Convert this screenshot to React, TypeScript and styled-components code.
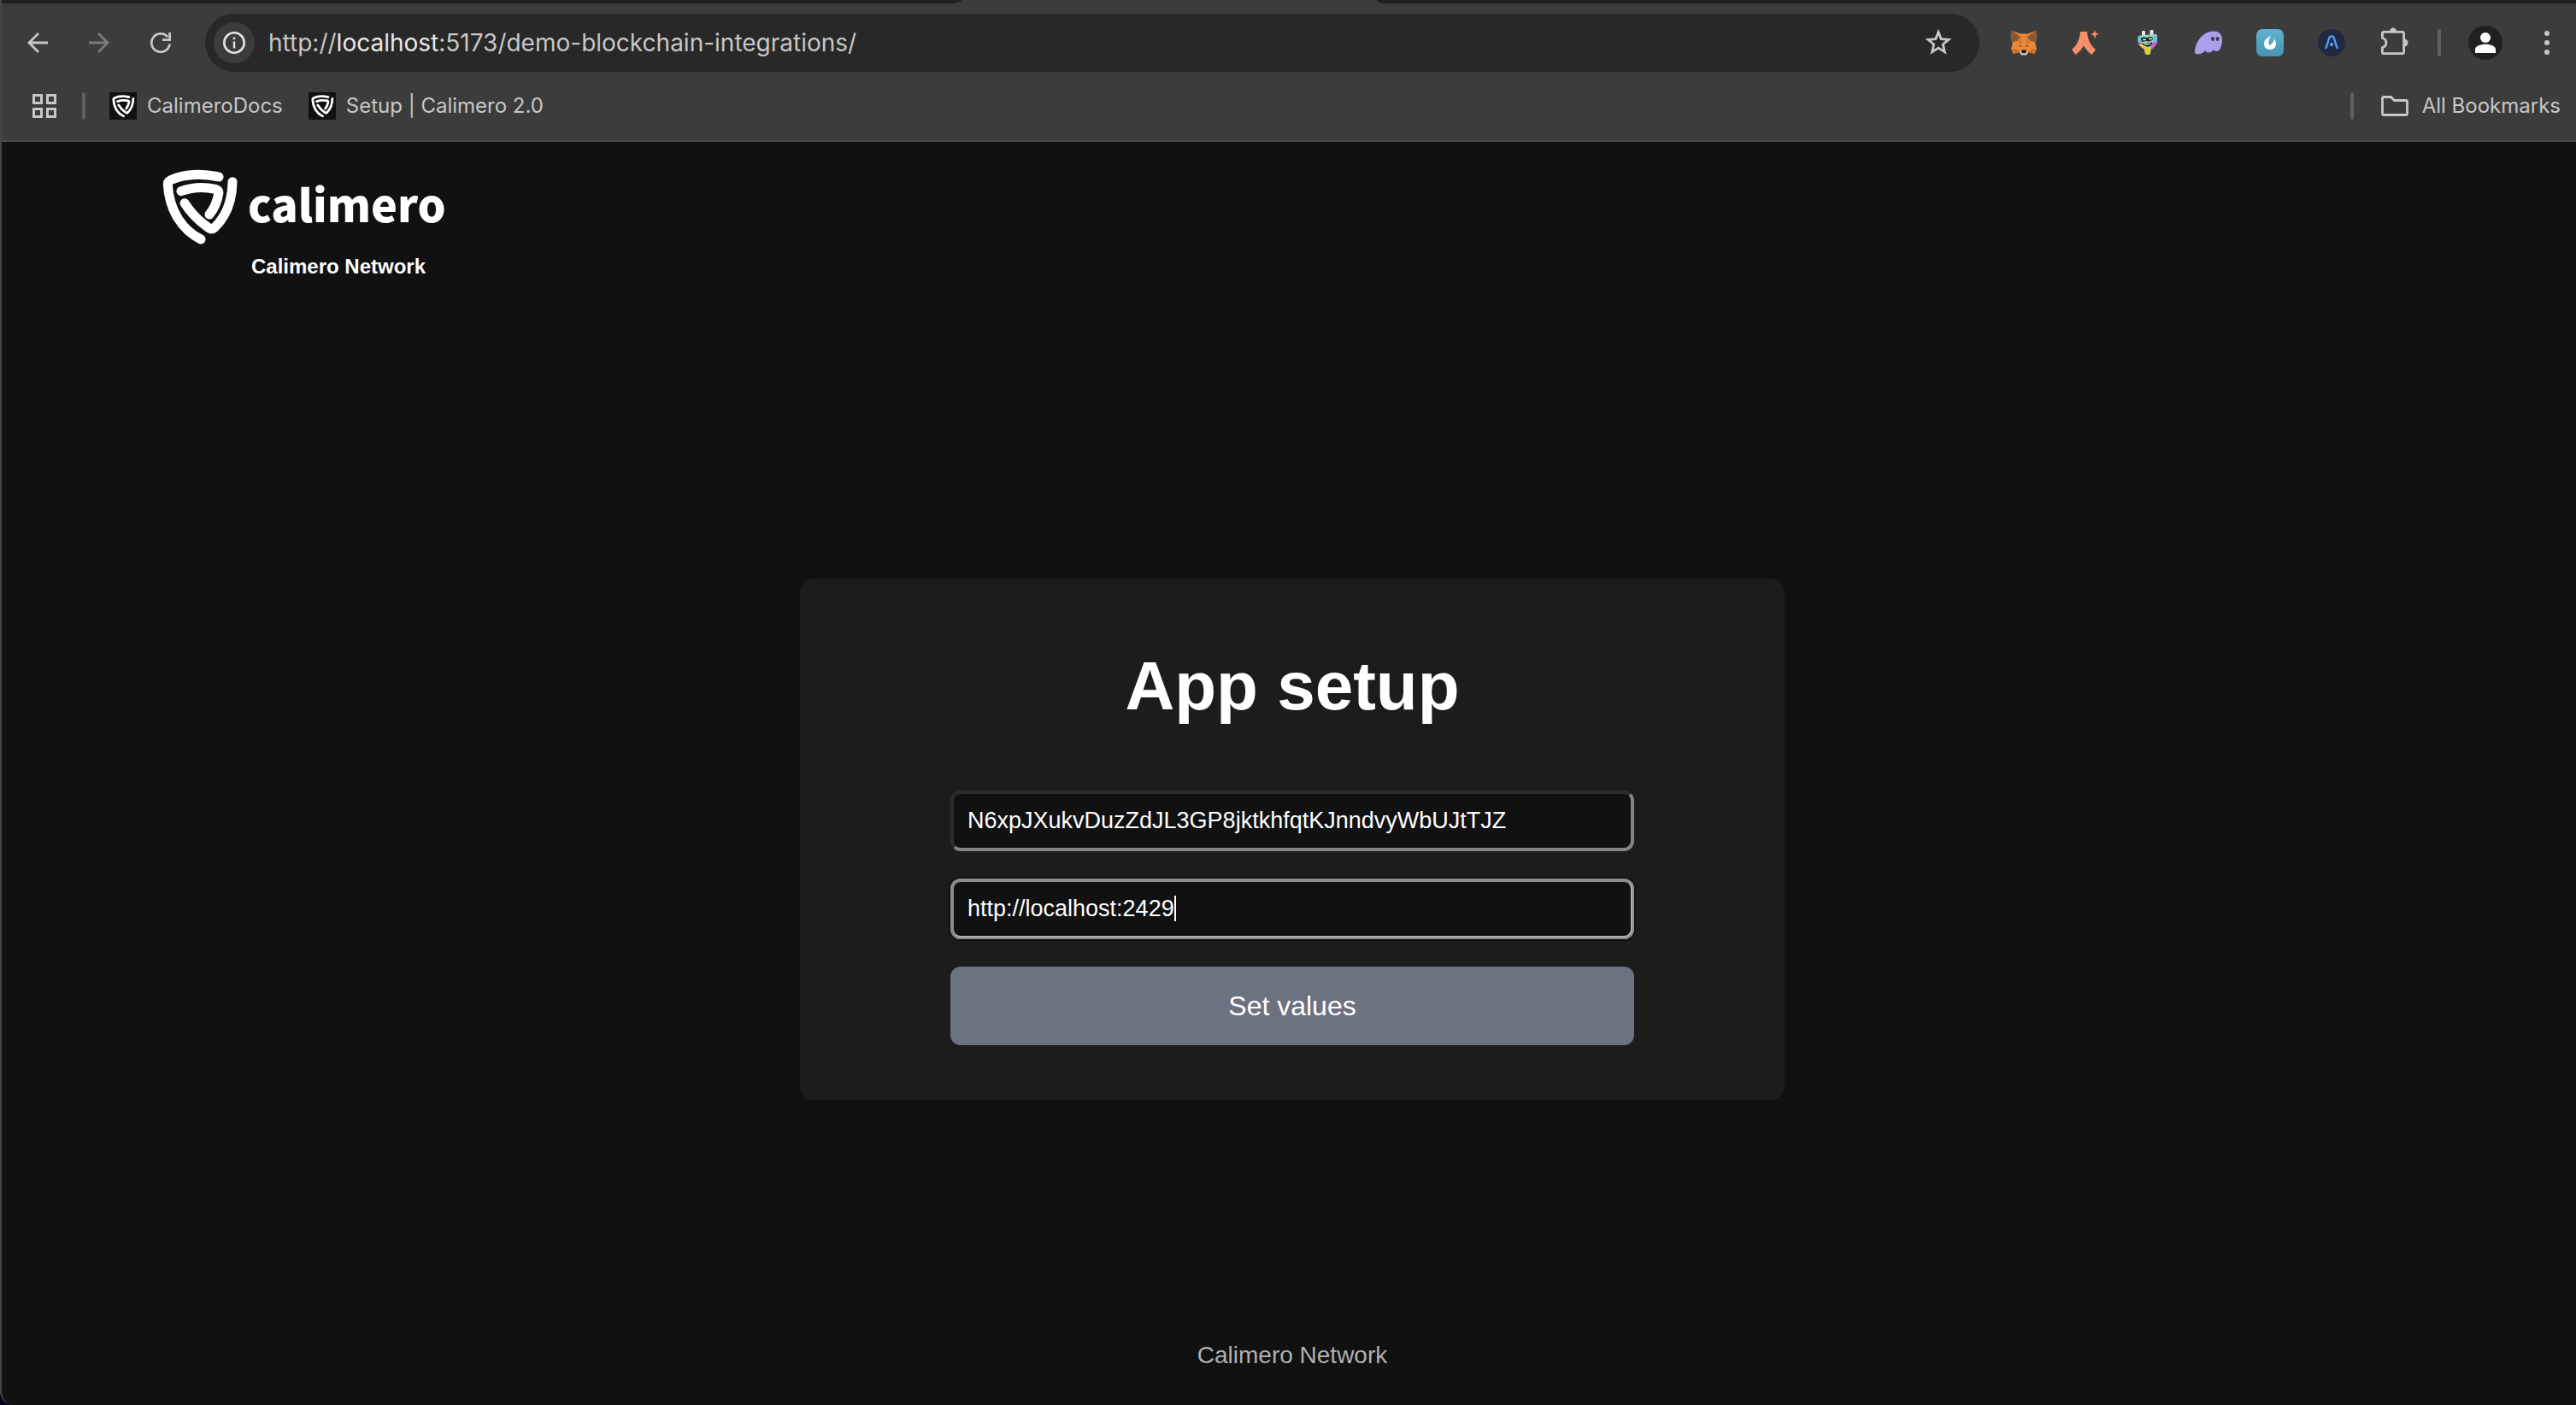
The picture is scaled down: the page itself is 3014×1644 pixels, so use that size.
import React, { useLayoutEffect, useRef, useState } from "react";
import styled, { createGlobalStyle } from "styled-components";

const GlobalStyle = createGlobalStyle`
  *, *::before, *::after { box-sizing: border-box; }
  body { margin: 0; background: #111111; }
  button, input { font: inherit; color: inherit; margin: 0; }
`;

const Window = styled.div`
  display: flex;
  flex-direction: column;
  min-height: 100vh;
  background: #111111;
  border-left: 2px solid #454545;
  border-bottom-left-radius: 16px;
  overflow: hidden;
  font-family: "Liberation Sans", Arial, sans-serif;
`;

const Backdrop = styled.div`
  background: #07031c;
`;

const Chrome = styled.header`
  background: #3c3c3c;
  border-bottom: 2px solid #4a4a4a;
  font-family: Inter, "SF Pro Text", sans-serif;
  color: #c7c7c7;
`;

const TabStrip = styled.div`
  display: grid;
  grid-template-columns: 1123fr 486fr 1403fr;
  height: 4px;
`;

const StripSegment = styled.div<{ $side: "left" | "right" }>`
  background: #1f2120;
  grid-column: ${(p) => (p.$side === "left" ? 1 : 3)};
  border-bottom-${(p) => (p.$side === "left" ? "right" : "left")}-radius: 12px 4px;
`;

const Toolbar = styled.nav`
  display: flex;
  align-items: center;
  height: 92px;
  padding: 0 10px 0 18px;
`;

const IconButton = styled.button`
  display: flex;
  align-items: center;
  justify-content: center;
  flex: none;
  width: 48px;
  height: 48px;
  padding: 0;
  border: 0;
  background: none;
`;

const NavGroup = styled.div`
  display: flex;
  gap: 24px;
`;

const Omnibox = styled.div`
  display: flex;
  align-items: center;
  flex: 1;
  height: 68px;
  margin: 0 28px;
  padding: 0 24px 0 10px;
  border-radius: 34px;
  background: #282828;
`;

const SiteInfo = styled(IconButton)`
  border-radius: 50%;
  background: #3c3c3c;
  margin-right: 16px;
`;

const Url = styled.a`
  flex: 1;
  font-size: 28px;
  line-height: 36px;
  color: #c7c7c7;
  text-decoration: none;
`;

const Host = styled.span`
  color: #e8e8e8;
`;

const Extensions = styled.div`
  display: flex;
  gap: 24px;
`;

const Divider = styled.span`
  flex: none;
  width: 4px;
  height: 32px;
  border-radius: 2px;
  background: #5f5f5f;
`;

const ProfileGroup = styled.div`
  display: flex;
  align-items: center;
  gap: 28px;
  margin: 0 24px 0 28px;
`;

const Bookmarks = styled.nav`
  display: flex;
  align-items: center;
  height: 68px;
  padding: 0 18px 12px 36px;
`;

const BookmarkDivider = styled(Divider)`
  margin: 0 28px 0 30px;
`;

const Bookmark = styled.a`
  display: flex;
  align-items: center;
  gap: 12px;
  margin-right: 30px;
  font-size: 24px;
  line-height: 32px;
  color: #c7c7c7;
  text-decoration: none;
`;

const AllBookmarks = styled.button`
  display: flex;
  align-items: center;
  gap: 16px;
  padding: 0 0 0 4px;
  border: 0;
  background: none;
  font-size: 24px;
  line-height: 32px;
`;

const Spacer = styled.span`
  flex: 1;
`;

const Page = styled.div`
  display: flex;
  flex-direction: column;
  flex: 1;
  margin-right: -8px;
  color: #ffffff;
`;

const Brand = styled.div`
  display: flex;
  flex-direction: column;
  align-items: flex-start;
  padding: 32px 188px 0;
`;

const BrandLogo = styled.div`
  display: flex;
  align-items: center;
  gap: 12px;
  height: 88px;
`;

const Wordmark = styled.span`
  padding-bottom: 8px;
  font-family: "Noto Sans CJK SC", "Source Sans Pro", sans-serif;
  font-weight: 900;
  font-size: 52px;
  line-height: 72px;
`;

const BrandName = styled.span`
  margin-left: 104px;
  margin-top: 12px;
  font-weight: 700;
  font-size: 24px;
  line-height: 28px;
`;

const Main = styled.main`
  display: flex;
  flex: 1;
  align-items: center;
  justify-content: center;
  padding-top: 70px;
`;

const Card = styled.form`
  display: flex;
  flex-direction: column;
  width: 1152px;
  padding: 64px 176px;
  border-radius: 16px;
  background: #1c1c1c;
`;

const Title = styled.h1`
  margin: 0 0 60px;
  font-size: 80px;
  line-height: 124px;
  text-align: center;
`;

const Fields = styled.div`
  display: flex;
  flex-direction: column;
  gap: 32px;
`;

const FieldBox = styled.div`
  position: relative;
`;

const Field = styled.input<{ $active?: boolean }>`
  display: block;
  width: 100%;
  height: 71px;
  padding: 16px;
  border: 4px solid;
  border-color: ${(p) =>
    p.$active ? "#8c8c8c #b0b0b0 #b0b0b0 #8c8c8c" : "#2d2d2d #858585 #858585 #2d2d2d"};
  border-radius: 12px;
  background: #111111;
  box-shadow: ${(p) => (p.$active ? "0 0 0 2px #101010" : "none")};
  outline: ${(p) => (p.$active ? "2px solid #8c8c8c" : "none")};
  outline-offset: -2px;
  font-size: 27px;
  line-height: 31px;
  color: #ffffff;
`;

const Caret = styled.span`
  position: absolute;
  top: 20px;
  width: 2px;
  height: 30px;
  background: #ffffff;
`;

const Submit = styled.button`
  height: 92px;
  border: 0;
  border-radius: 12px;
  background: #6d7280;
  font-size: 32px;
  line-height: 36px;
`;

const Footer = styled.footer`
  padding: 0 0 40px;
  font-size: 28px;
  line-height: 36px;
  text-align: center;
  color: #b0b0b0;
`;

function ShieldStrokes() {
  return (
    <>
      <path d="M262 79C205 66 138 68 94 90C86 94 82 98 83 106C88 195 132 265 199 298" />
      <path d="M310 96C309 160 288 217 248 256C240 263 233 263 225 257C190 232 163 205 142 171" />
      <path d="M130 129C168 115 211 113 250 122C260 125 263 130 261 139C256 167 246 190 229 211" />
    </>
  );
}

function Shield({ size }: { size: number }) {
  return (
    <svg width={size} height={size} viewBox="64 52 264 264" fill="none" stroke="#ffffff" strokeWidth="33" strokeLinecap="round" strokeLinejoin="round" aria-hidden="true">
      <ShieldStrokes />
    </svg>
  );
}

function Favicon() {
  return (
    <svg width="32" height="32" viewBox="0 0 32 32" aria-hidden="true">
      <rect width="32" height="32" fill="#111111" />
      <g transform="translate(3 3) scale(0.102) translate(-66 -54)" fill="none" stroke="#ffffff" strokeWidth="27" strokeLinecap="round" strokeLinejoin="round">
        <ShieldStrokes />
      </g>
    </svg>
  );
}

function ArrowIcon({ color = "#c7c7c7", flip = false }: { color?: string; flip?: boolean }) {
  return (
    <svg width="24" height="24" viewBox="0 0 24 24" aria-hidden="true">
      <path transform={flip ? "matrix(-1 0 0 1 24 0)" : undefined} d="M24 12H2M13 1L2 12L13 23" fill="none" stroke={color} strokeWidth="2.8" />
    </svg>
  );
}

function ReloadIcon() {
  return (
    <svg width="24" height="24" viewBox="0 0 24 24" aria-hidden="true">
      <path d="M22.6 13.5A10.7 10.7 0 1 1 20.2 5.2" fill="none" stroke="#c7c7c7" strokeWidth="2.7" />
      <path d="M24 0V10H14V7.2H21.2V0Z" fill="#c7c7c7" />
    </svg>
  );
}

function InfoIcon() {
  return (
    <svg width="26" height="26" viewBox="0 0 26 26" aria-hidden="true">
      <circle cx="13" cy="13" r="11.7" fill="none" stroke="#e3e3e3" strokeWidth="2.6" />
      <path d="M13 11.5V19.5M13 6.6V9.2" stroke="#e3e3e3" strokeWidth="2.4" />
    </svg>
  );
}

function StarIcon() {
  return (
    <svg width="32" height="32" viewBox="0 0 32 32" aria-hidden="true">
      <path d="M16 3.5L19.2 11.6L28 12.3L21.3 17.9L23.4 26.8L16 22.1L8.6 26.8L10.7 17.9L4 12.3L12.8 11.6Z" fill="none" stroke="#c7c7c7" strokeWidth="2.8" />
    </svg>
  );
}

function FoxIcon() {
  return (
    <svg width="32" height="32" viewBox="0 0 32 32" aria-hidden="true">
      <path d="M2 2L12 5.500H20L30 2L31 12L29 16L31 23L28.500 29L21 27L19 30H13L11 27L3.500 29L1 23L3 16L1 12Z" fill="#e8883a" />
      <path d="M1.500 1.500L12.500 9L8 14L1.500 15.500L0.500 8Z" fill="#8f5730" />
      <path d="M30.500 1.500L19.500 9L24 14L30.500 15.500L31.500 8Z" fill="#8f5730" />
      <path d="M8 14L12.500 9L14 19L10 17Z" fill="#d47a33" />
      <path d="M24 14L19.500 9L18 19L22 17Z" fill="#d47a33" />
      <path d="M1.500 23.500H8L11 27L3.500 29ZM30.500 23.500H24L21 27L28.500 29Z" fill="#cf7228" />
      <path d="M9.500 18.500L14 20L12.500 20.800ZM22.500 18.500L18 20L19.500 20.800Z" fill="#3f3226" />
      <path d="M10.500 26.500L14 25H18L21.500 26.500L19 30.500H13Z" fill="#cfc3b8" />
      <path d="M13 26L14 24.500H18L19 26L18 28H14Z" fill="#151515" />
    </svg>
  );
}

function ArgentIcon() {
  return (
    <svg width="32" height="32" viewBox="0 0 32 32" aria-hidden="true">
      <path d="M10 3H18C18.500 12 22 19 28 24L23.500 30C19.500 27 16.500 23.500 14 19.500C11.500 23.500 8.500 27 4.500 30L0 24C6 19 9.500 12 10 3Z" fill="#f48f68" />
      <path d="M27 1L28.300 4.700L32 6L28.300 7.300L27 11.500L25.700 7.300L22 6L25.700 4.700Z" fill="#f48f68" />
    </svg>
  );
}

function PlugIcon() {
  return (
    <svg width="32" height="32" viewBox="0 0 32 32" aria-hidden="true">
      <defs>
        <clipPath id="plug-head">
          <path d="M5.500 9Q6 8 8 7.500L26 6Q28 6 28 8V15Q27 19 22 23L19.500 24H13.500L8 20Q5 17 5.500 9Z" />
        </clipPath>
      </defs>
      <rect x="10" y="2" width="4" height="7" rx="1" fill="#e6e6ee" />
      <rect x="19.500" y="1" width="4" height="7" rx="1" fill="#e6e6ee" />
      <path d="M13 22H20.500V26L19.500 30H14.500L13 26Z" fill="#d9d13c" />
      <g clipPath="url(#plug-head)">
        <rect x="4" y="5" width="25" height="20" fill="#98dba6" />
        <path d="M4 9L10 8L9 16L4 18Z" fill="#52cfd0" />
        <path d="M22 9L29 6V17L24 18Z" fill="#6fc3ea" />
        <path d="M4 14L12 17L8 22L4 20ZM22 16L28 14L26 22L20 25Z" fill="#c95ccb" />
        <path d="M7 18L13 17L20 22L21 25H12Z" fill="#d9d13c" />
      </g>
      <path d="M9 11C11 9 14 9 16 10.500C18 8.500 21 8.500 22.500 10V13L18 14.500L15 14L10 15Z" fill="#141c33" />
      <path d="M10.500 17L22 15.500C22 19 20 20.500 17 20.500C14 20.500 12 19 10.500 17Z" fill="#141c33" />
      <path d="M11 12.500H15M18 11.500H22M13 17.800L20 17.400" stroke="#f2f2f2" strokeWidth="1.400" />
    </svg>
  );
}

function GhostIcon() {
  return (
    <svg width="32" height="32" viewBox="0 0 32 32" aria-hidden="true">
      <path d="M0 26C1 14 10 2.500 22 2.500C29 2.500 32 7 32 13C32 20 29 26 25.500 26C23.500 26 22.500 25 22 24C20.500 26.500 18.500 27.500 16 27.500C13.800 27.500 12.500 26.500 12.500 25C10 28 6 29.500 3 29.500C0.500 29.500 0 28 0 26Z" fill="#ab9fec" />
      <ellipse cx="21" cy="11.500" rx="1.900" ry="2.600" fill="#3a3a3c" />
      <ellipse cx="26.500" cy="11.500" rx="1.900" ry="2.600" fill="#3a3a3c" />
    </svg>
  );
}

function FlameIcon() {
  return (
    <svg width="32" height="32" viewBox="0 0 32 32" aria-hidden="true">
      <defs>
        <linearGradient id="flame-bg" x1="0" y1="0" x2="0" y2="1">
          <stop offset="0" stopColor="#5fb3cf" />
          <stop offset="1" stopColor="#4595b3" />
        </linearGradient>
      </defs>
      <rect width="32" height="32" rx="7" fill="url(#flame-bg)" />
      <path d="M17.500 8C12 10 9 13.500 9 17.500C9 21.500 12 24 16 24C20 24 23 21.500 23 17.500C23 15 22.300 13 21 11.500C20.500 14.500 18.500 17 15.500 19C13.500 16 14.500 11.500 17.500 8Z" fill="#ffffff" />
    </svg>
  );
}

function ArchIcon() {
  return (
    <svg width="32" height="32" viewBox="0 0 32 32" aria-hidden="true">
      <circle cx="16" cy="16" r="16" fill="#222842" />
      <path d="M9 23C11 19 12 14 13 11C14 7.500 18 7.500 19 11C20 14 21 19 23 23" fill="none" stroke="#4f9df5" strokeWidth="2.400" />
      <circle cx="16" cy="18" r="2.200" fill="#4f9df5" />
    </svg>
  );
}

function PuzzleIcon() {
  return (
    <svg width="36" height="36" viewBox="0 0 36 36" aria-hidden="true">
      <path d="M5.400 12.500V7Q5.400 5.400 7 5.400H29Q30.600 5.400 30.600 7V29Q30.600 30.600 29 30.600H7Q5.400 30.600 5.400 29V23.500C11.500 22 11.500 14 5.400 12.500Z" fill="none" stroke="#c7c7c7" strokeWidth="2.800" strokeLinejoin="round" />
      <path d="M14 5A4 4.500 0 0 1 22 5ZM31 13.500A4.500 4.500 0 0 1 31 22.500Z" fill="#c7c7c7" />
    </svg>
  );
}

function ProfileIcon() {
  return (
    <svg width="40" height="40" viewBox="0 0 40 40" aria-hidden="true">
      <circle cx="20" cy="20" r="20" fill="#1f2120" />
      <circle cx="20" cy="14" r="6" fill="#ffffff" />
      <path d="M8 32V28C8 24 14 21.800 20 21.800S32 24 32 28V32Z" fill="#ffffff" />
    </svg>
  );
}

function MenuIcon() {
  return (
    <svg width="6" height="28" viewBox="0 0 6 28" fill="#c7c7c7" aria-hidden="true">
      <circle cx="3" cy="3" r="3" />
      <circle cx="3" cy="14" r="3" />
      <circle cx="3" cy="25" r="3" />
    </svg>
  );
}

function AppsIcon() {
  return (
    <svg width="28" height="28" viewBox="0 0 28 28" fill="none" stroke="#c7c7c7" strokeWidth="3" aria-hidden="true">
      <rect x="1.500" y="1.500" width="9" height="9" />
      <rect x="17.500" y="1.500" width="9" height="9" />
      <rect x="1.500" y="17.500" width="9" height="9" />
      <rect x="17.500" y="17.500" width="9" height="9" />
    </svg>
  );
}

function FolderIcon() {
  return (
    <svg width="32" height="24" viewBox="0 0 32 24" aria-hidden="true">
      <path d="M1.500 3Q1.500 1.500 3 1.500H11.500L15.500 5.500H29Q30.500 5.500 30.500 7V21Q30.500 22.500 29 22.500H3Q1.500 22.500 1.500 21Z" fill="none" stroke="#c7c7c7" strokeWidth="2.800" />
    </svg>
  );
}

const EXTENSIONS = [
  { name: "MetaMask", Icon: FoxIcon },
  { name: "Argent", Icon: ArgentIcon },
  { name: "Plug", Icon: PlugIcon },
  { name: "Phantom", Icon: GhostIcon },
  { name: "Flame wallet", Icon: FlameIcon },
  { name: "Arch wallet", Icon: ArchIcon },
  { name: "Extensions", Icon: PuzzleIcon },
];

const BOOKMARKS = ["CalimeroDocs", "Setup | Calimero 2.0"];

function NodeUrlField() {
  const [value, setValue] = useState("http://localhost:2429");
  const [caretLeft, setCaretLeft] = useState(0);
  const ref = useRef<HTMLInputElement>(null);

  useLayoutEffect(() => {
    const input = ref.current;
    const context = document.createElement("canvas").getContext("2d");
    if (!input || !context) return;
    const style = getComputedStyle(input);
    context.font = `${style.fontSize} ${style.fontFamily}`;
    setCaretLeft(Math.round(20 + context.measureText(value).width));
  }, [value]);

  return (
    <FieldBox>
      <Field ref={ref} $active aria-label="Node URL" value={value} onChange={(e) => setValue(e.target.value)} />
      <Caret style={{ left: caretLeft }} />
    </FieldBox>
  );
}

export default function App() {
  const [appId, setAppId] = useState("N6xpJXukvDuzZdJL3GP8jktkhfqtKJnndvyWbUJtTJZ");

  return (
    <Backdrop>
      <GlobalStyle />
      <Window>
        <Chrome>
          <TabStrip>
            <StripSegment $side="left" />
            <StripSegment $side="right" />
          </TabStrip>
          <Toolbar aria-label="Browser toolbar">
            <NavGroup>
              <IconButton aria-label="Back"><ArrowIcon /></IconButton>
              <IconButton aria-label="Forward"><ArrowIcon color="#7b7b7b" flip /></IconButton>
              <IconButton aria-label="Reload"><ReloadIcon /></IconButton>
            </NavGroup>
            <Omnibox>
              <SiteInfo aria-label="Site information"><InfoIcon /></SiteInfo>
              <Url href="#">http://<Host>localhost</Host>:5173/demo-blockchain-integrations/</Url>
              <IconButton aria-label="Bookmark this tab"><StarIcon /></IconButton>
            </Omnibox>
            <Extensions>
              {EXTENSIONS.map(({ name, Icon }) => (
                <IconButton key={name} aria-label={name}><Icon /></IconButton>
              ))}
            </Extensions>
            <ProfileGroup>
              <Divider />
              <IconButton aria-label="Profile"><ProfileIcon /></IconButton>
            </ProfileGroup>
            <IconButton aria-label="Menu"><MenuIcon /></IconButton>
          </Toolbar>
          <Bookmarks aria-label="Bookmarks">
            <AppsIcon />
            <BookmarkDivider />
            {BOOKMARKS.map((title) => (
              <Bookmark key={title} href="#"><Favicon />{title}</Bookmark>
            ))}
            <Spacer />
            <BookmarkDivider />
            <AllBookmarks><FolderIcon />All Bookmarks</AllBookmarks>
          </Bookmarks>
        </Chrome>
        <Page>
          <Brand>
            <BrandLogo>
              <Shield size={88} />
              <Wordmark>calimero</Wordmark>
            </BrandLogo>
            <BrandName>Calimero Network</BrandName>
          </Brand>
          <Main>
            <Card onSubmit={(e) => e.preventDefault()}>
              <Title>App setup</Title>
              <Fields>
                <Field aria-label="Application ID" value={appId} onChange={(e) => setAppId(e.target.value)} />
                <NodeUrlField />
                <Submit type="submit">Set values</Submit>
              </Fields>
            </Card>
          </Main>
          <Footer>Calimero Network</Footer>
        </Page>
      </Window>
    </Backdrop>
  );
}
